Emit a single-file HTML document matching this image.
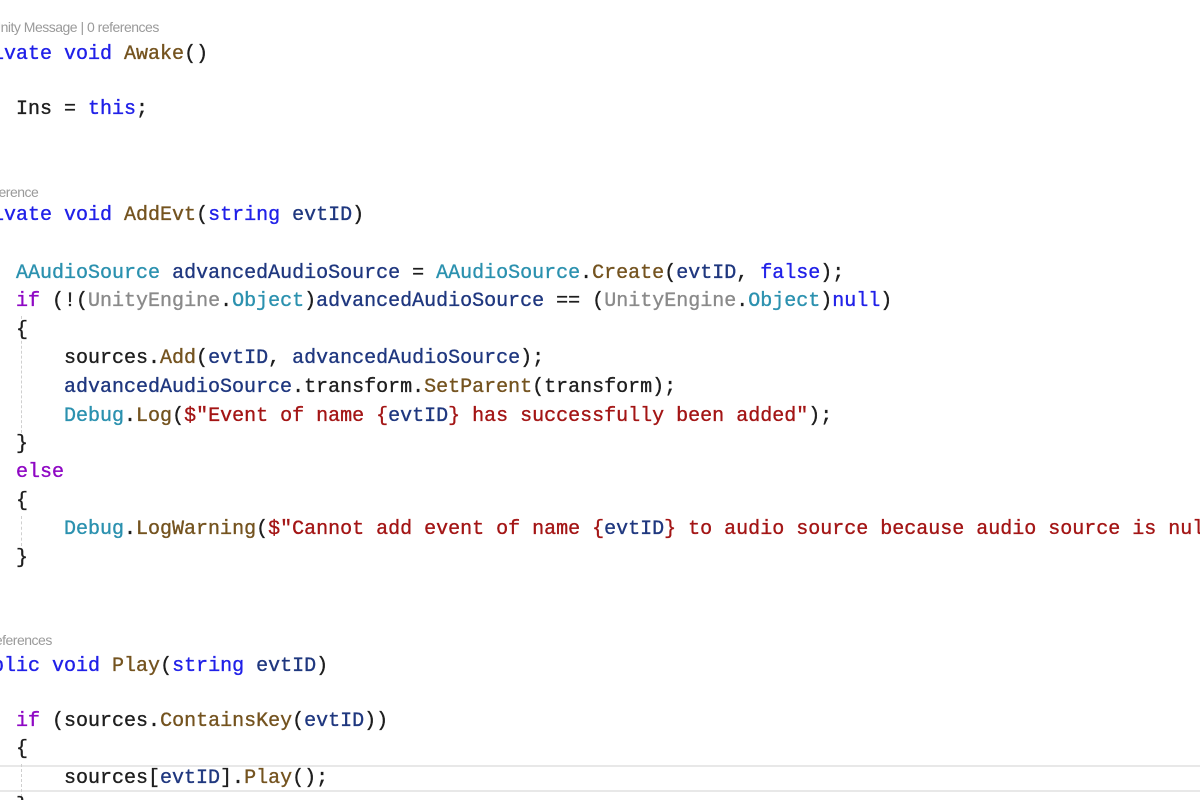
<!DOCTYPE html>
<html><head><meta charset="utf-8"><style>
html,body{margin:0;padding:0;background:#fff;width:1200px;height:800px;overflow:hidden;position:relative}
.l{position:absolute;left:-32px;white-space:pre;font-family:"Liberation Mono",monospace;font-size:20px;line-height:28px;height:28px;color:#1e1e1e;-webkit-text-stroke:0.35px currentColor;margin-top:2px}
.c{position:absolute;white-space:pre;font-family:"Liberation Sans",sans-serif;font-size:14px;line-height:18px;color:#9a9a9a;letter-spacing:-0.5px}
.k{color:#2020e8}.m{color:#74531f}.t{color:#2b91af}.s{color:#a31515}.p{color:#1f377f}.f{color:#8f08c4}.g{color:#8a8a8a}
.hl{position:absolute;left:0;top:765px;width:1200px;height:27px;border-top:2px solid #e8e8e8;border-bottom:2px solid #e8e8e8;box-sizing:border-box}
.guide{position:absolute;left:21px;border-left:1px dashed #cfcfcf;width:0}
</style></head><body>
<div class="hl"></div>
<div class="guide" style="top:316px;height:122px"></div>
<div class="guide" style="top:516px;height:30px"></div>
<div class="guide" style="top:764px;height:38px"></div>
<div class="c" style="left:-9px;top:18px">Unity Message | 0 references</div>
<div class="l" style="top:39px"><span class="k">private void</span> <span class="m">Awake</span>()</div>
<div class="l" style="top:94px">    Ins = <span class="k">this</span>;</div>
<div class="c" style="left:-27px;top:183px">1 reference</div>
<div class="l" style="top:200px"><span class="k">private void</span> <span class="m">AddEvt</span>(<span class="k">string</span> <span class="p">evtID</span>)</div>
<div class="l" style="top:258px">    <span class="t">AAudioSource</span> <span class="p">advancedAudioSource</span> = <span class="t">AAudioSource</span>.<span class="m">Create</span>(<span class="p">evtID</span>, <span class="k">false</span>);</div>
<div class="l" style="top:286px">    <span class="f">if</span> (!(<span class="g">UnityEngine</span>.<span class="t">Object</span>)<span class="p">advancedAudioSource</span> == (<span class="g">UnityEngine</span>.<span class="t">Object</span>)<span class="k">null</span>)</div>
<div class="l" style="top:315px">    {</div>
<div class="l" style="top:343px">        sources.<span class="m">Add</span>(<span class="p">evtID</span>, <span class="p">advancedAudioSource</span>);</div>
<div class="l" style="top:372px">        <span class="p">advancedAudioSource</span>.transform.<span class="m">SetParent</span>(transform);</div>
<div class="l" style="top:401px">        <span class="t">Debug</span>.<span class="m">Log</span>(<span class="s">$"Event of name {</span><span class="p">evtID</span><span class="s">} has successfully been added"</span>);</div>
<div class="l" style="top:429px">    }</div>
<div class="l" style="top:457px">    <span class="f">else</span></div>
<div class="l" style="top:486px">    {</div>
<div class="l" style="top:514px">        <span class="t">Debug</span>.<span class="m">LogWarning</span>(<span class="s">$"Cannot add event of name {</span><span class="p">evtID</span><span class="s">} to audio source because audio source is null"</span>);</div>
<div class="l" style="top:543px">    }</div>
<div class="c" style="left:-20px;top:631px">2 references</div>
<div class="l" style="top:651px"><span class="k">public void</span> <span class="m">Play</span>(<span class="k">string</span> <span class="p">evtID</span>)</div>
<div class="l" style="top:706px">    <span class="f">if</span> (sources.<span class="m">ContainsKey</span>(<span class="p">evtID</span>))</div>
<div class="l" style="top:734px">    {</div>
<div class="l" style="top:763px">        sources[<span class="p">evtID</span>].<span class="m">Play</span>();</div>
<div class="l" style="top:791px">    }</div>
</body></html>
